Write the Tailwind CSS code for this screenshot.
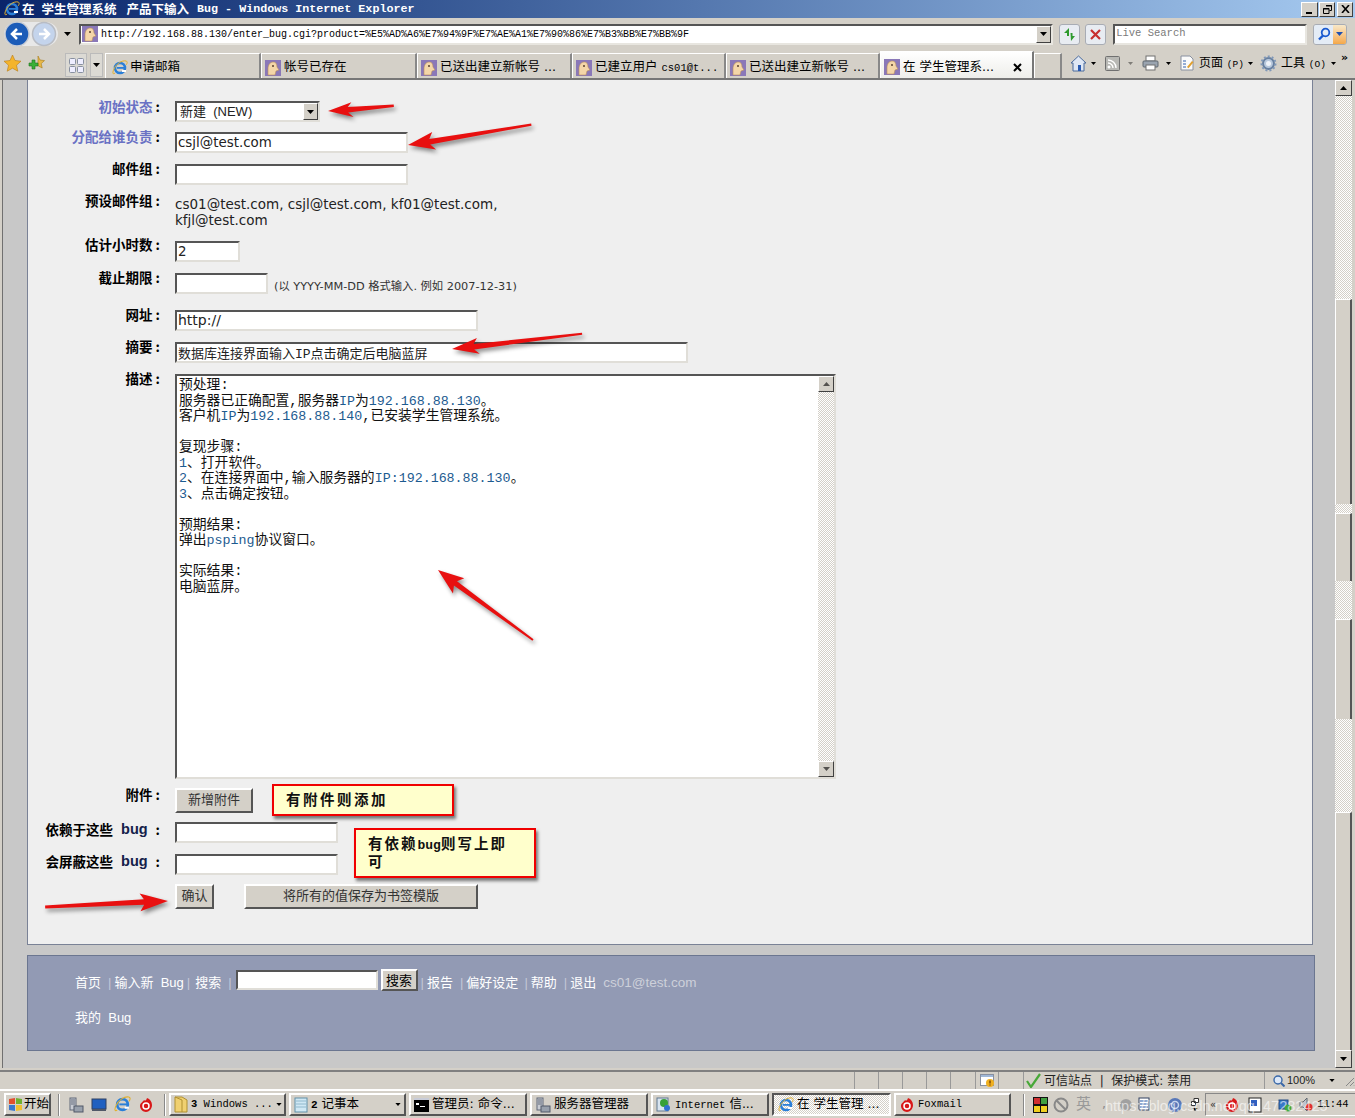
<!DOCTYPE html>
<html lang="zh-CN">

<head>
    <meta charset="UTF-8">
    <title>在 学生管理系统 产品下输入 Bug</title>
    <script src="https://cdn.jsdelivr.net/npm/@tailwindcss/browser@4"></script>
</head>

<body class="bg-[#d4d0c8]">
    <!-- shared icons -->
    <svg class="hidden">
        <symbol id="fav" viewBox="0 0 16 16">
            <rect width="16" height="16" fill="#8a78b8" />
            <path d="M3 15V9c0-4 2-7 5-7s4 2 4 5l2 3-3 1-1 4z" fill="#f4d6a8" stroke="#b98f5c" stroke-width=".6" />
            <circle cx="8" cy="6" r="1" fill="#5a4030" />
        </symbol>
        <symbol id="ie" viewBox="0 0 16 16">
            <circle cx="8" cy="8" r="5" fill="none" stroke="#2a7fd8" stroke-width="2.6" />
            <rect x="5" y="7" width="8" height="1.8" fill="#2a7fd8" />
            <path d="M3 13C1 15 0 13 2 9 4 4 10 0 14 1c2 .6 1 3 0 4" fill="none" stroke="#e0b030" stroke-width="1" />
            <rect x="10" y="10" width="4" height="2" fill="#fff" />
        </symbol>
        <symbol id="server" viewBox="0 0 16 16">
            <rect x="2" y="1" width="6" height="12" fill="#c8ccd4" stroke="#606878" />
            <path d="M3 3h4M3 5h4M3 7h4" stroke="#606878" />
            <rect x="6" y="9" width="9" height="6" fill="#98a0ac" stroke="#505868" />
        </symbol>
        <symbol id="fox" viewBox="0 0 16 16">
            <path d="M9 1c3 1 5 4 5 7 0 4-3 7-6 7s-6-3-6-6c0-3 3-4 4-6 1 1 2 1 3-2z" fill="#d81818" />
            <circle cx="8" cy="9" r="3" fill="none" stroke="#fff" stroke-width="1.5" />
        </symbol>
        <symbol id="drop" viewBox="0 0 7 4">
            <path d="M0 0h7L3.500 4z" fill="#000" />
        </symbol>
    </svg>

    <div class="relative w-[1355px] h-[1118px] overflow-hidden flex flex-col font-['DejaVu_Sans','Noto_Sans_CJK_SC',sans-serif] text-[13px]">

        <!-- title bar -->
        <div class="h-[18px] shrink-0 flex items-center bg-linear-to-r from-[#0a246a] to-[#a6caf0] text-white font-bold pl-[4px] whitespace-nowrap">
            <svg class="w-[16px] h-[16px] mr-[2px]"><use href="#ie" /></svg>
            <span class="text-[12.500px] font-['Noto_Sans_CJK_SC',sans-serif] leading-[18px]">在</span>
            <span class="ml-[7px] text-[12.500px] font-['Noto_Sans_CJK_SC',sans-serif] leading-[18px]">学生管理系统</span>
            <span class="ml-[10px] text-[12.500px] font-['Noto_Sans_CJK_SC',sans-serif] leading-[18px]">产品下输入</span>
            <span class="ml-[8px] text-[11.700px] font-['Liberation_Mono',monospace] leading-[18px]">Bug - Windows Internet Explorer</span>
            <div class="ml-auto flex gap-[1px] pr-[2px]">
                <div class="w-[17px] h-[15px] bg-[#d4d0c8] border border-t-white border-l-white border-r-[#404040] border-b-[#404040] flex items-end justify-center pb-[2px]"><div class="w-[6px] h-[2px] bg-black mr-[2px]"></div></div>
                <div class="w-[16px] h-[15px] bg-[#d4d0c8] border border-t-white border-l-white border-r-[#404040] border-b-[#404040] flex items-center justify-center">
                    <svg class="w-[9px] h-[9px]" viewBox="0 0 9 9"><path d="M3 .5h5.500v5H6.500M.5 3.500h5.500v5H.5z" fill="none" stroke="#000" /><path d="M3 1h6M0 4h6" stroke="#000" /></svg>
                </div>
                <div class="w-[16px] h-[15px] ml-[1px] bg-[#d4d0c8] border border-t-white border-l-white border-r-[#404040] border-b-[#404040] flex items-center justify-center">
                    <svg class="w-[9px] h-[8px]" viewBox="0 0 9 8"><path d="M1 0l7 8M8 0L1 8" stroke="#000" stroke-width="1.6" /></svg>
                </div>
            </div>
        </div>

        <!-- address bar -->
        <div class="h-[30px] shrink-0 flex items-center pl-[4px] pr-[8px] pt-[2px]">
            <div class="flex items-center w-[54px] h-[24px] bg-[#e8e8e8] rounded-full">
                <svg class="w-[26px] h-[26px] shrink-0" viewBox="0 0 26 26">
                    <circle cx="13" cy="13" r="12" fill="#1c5cb8" stroke="#c8ccd4" stroke-width="1.500" />
                    <path d="M18 13H9M13 8l-5 5 5 5" fill="none" stroke="#fff" stroke-width="2.500" />
                </svg>
                <svg class="w-[26px] h-[26px] shrink-0 ml-[1px]" viewBox="0 0 26 26">
                    <circle cx="13" cy="13" r="11.500" fill="#c4d4ec" stroke="#b8bcc4" stroke-width="1.500" />
                    <path d="M8 13h9M13 8l5 5-5 5" fill="none" stroke="#fff" stroke-width="2.500" />
                </svg>
            </div>
            <svg class="w-[7px] h-[4px] ml-[6px]"><use href="#drop" /></svg>
            <div class="ml-[8px] w-[975px] h-[21px] flex items-center bg-white border-2 border-t-[#555] border-l-[#555] border-r-[#e8e6e0] border-b-[#e8e6e0]">
                <svg class="w-[16px] h-[16px] ml-[1px] shrink-0"><use href="#fav" /></svg>
                <span class="ml-[3px] font-['Liberation_Mono',monospace] text-[10px] text-black whitespace-nowrap">http://192.168.88.130/enter_bug.cgi?product=%E5%AD%A6%E7%94%9F%E7%AE%A1%E7%90%86%E7%B3%BB%E7%BB%9F</span>
                <div class="ml-auto w-[15px] h-[17px] bg-[#d4d0c8] border border-t-white border-l-white border-r-[#404040] border-b-[#404040] flex items-center justify-center"><svg class="w-[7px] h-[4px]"><use href="#drop" /></svg></div>
            </div>
            <div class="ml-[6px] w-[21px] h-[21px] flex items-center justify-center bg-[#e8ecf2] border border-[#a8acb4] rounded-[3px]">
                <svg class="w-[15px] h-[15px]" viewBox="0 0 15 15"><path d="M7 1L2 6h3v3h2zM9 14l4-5h-2.500V6H8.500z" fill="#2e9a2e" /></svg>
            </div>
            <div class="ml-[5px] w-[21px] h-[21px] flex items-center justify-center bg-[#e8ecf2] border border-[#a8acb4] rounded-[3px]">
                <svg class="w-[11px] h-[11px]" viewBox="0 0 11 11"><path d="M1 1l9 9M10 1l-9 9" stroke="#c83030" stroke-width="2.200" /></svg>
            </div>
            <div class="ml-[7px] w-[194px] h-[21px] flex items-center bg-white border-2 border-t-[#555] border-l-[#555] border-r-[#e8e6e0] border-b-[#e8e6e0] pl-[1px] font-['Liberation_Mono',monospace] text-[10.500px] text-[#7a7a7a]">Live Search</div>
            <div class="ml-[6px] flex h-[21px] rounded-[3px] overflow-hidden border border-[#a8acb4]">
                <div class="w-[19px] bg-[#e4ecf6] flex items-center justify-center">
                    <svg class="w-[14px] h-[14px]" viewBox="0 0 14 14"><circle cx="8.500" cy="5.500" r="3.800" fill="none" stroke="#1a5ad0" stroke-width="1.800" /><path d="M6 8.500L2 12.500" stroke="#1a5ad0" stroke-width="2.400" /></svg>
                </div>
                <div class="w-[13px] bg-linear-to-b from-[#f8e8c8] to-[#f4a848] flex items-center justify-center">
                    <svg class="w-[7px] h-[4px]" viewBox="0 0 7 4"><path d="M0 0h7L3.500 4z" fill="#2050b0" /></svg>
                </div>
            </div>
        </div>

        <!-- tabs and command bar -->
        <div class="h-[32px] shrink-0 flex items-end pl-[4px] text-[12.500px] border-b-2 border-[#777]">
            <div class="flex items-center h-[29px] w-[55px] gap-[7px] self-center">
                <svg class="w-[17px] h-[17px]" viewBox="0 0 17 17"><path d="M8.500 0l2.500 5.500 6 .7-4.500 4 1.300 6-5.300-3-5.300 3 1.300-6L0 6.200l6-.7z" fill="#f4b42c" stroke="#b87c18" stroke-width=".6" /></svg>
                <svg class="w-[17px] h-[17px]" viewBox="0 0 17 17"><path d="M10 1l2 4 4.500.6-3.300 3 1 4.400-4.200-2.300z" fill="#e8b848" stroke="#a87c18" stroke-width=".6" /><path d="M4 6h3V3h3v3h3v3h-3v3H7V9H4z" fill="#38b038" stroke="#207020" stroke-width=".6" transform="translate(-3 2)" /></svg>
            </div>
            <div class="ml-[6px] w-[22px] h-[24px] mb-[1px] flex items-center justify-center border border-[#bbb] bg-[#dcdad4]">
                <svg class="w-[15px] h-[15px]" viewBox="0 0 15 15"><rect x=".5" y=".5" width="6" height="6" rx="1" fill="#eef" stroke="#8890a0" /><rect x="8.500" y=".5" width="6" height="6" rx="1" fill="#eef" stroke="#8890a0" /><rect x=".5" y="8.500" width="6" height="6" rx="1" fill="#eef" stroke="#8890a0" /><rect x="8.500" y="8.500" width="6" height="6" rx="1" fill="#eef" stroke="#8890a0" /></svg>
            </div>
            <div class="ml-[3px] w-[13px] h-[24px] mb-[1px] flex items-center justify-center border border-[#bbb] bg-[#dcdad4]"><svg class="w-[7px] h-[4px]"><use href="#drop" /></svg></div>
            <div class="ml-[2px] w-[156px] h-[25px] flex items-center gap-[2px] pl-[6px] pt-[3px] border-t border-l border-t-white border-l-white border-r-2 border-r-[#888]">
                <svg class="w-[16px] h-[16px]"><use href="#ie" /></svg><span>申请邮箱</span>
            </div>
            <div class="w-[156px] h-[25px] flex items-center gap-[3px] pl-[3px] pt-[3px] border-t border-l border-t-white border-l-white border-r-2 border-r-[#888]">
                <svg class="w-[16px] h-[16px]"><use href="#fav" /></svg><span>帐号已存在</span>
            </div>
            <div class="w-[155px] h-[25px] flex items-center gap-[3px] pl-[3px] pt-[3px] border-t border-l border-t-white border-l-white border-r-2 border-r-[#888]">
                <svg class="w-[16px] h-[16px]"><use href="#fav" /></svg><span class="whitespace-nowrap">已送出建立新帐号 ...</span>
            </div>
            <div class="w-[154px] h-[25px] flex items-center gap-[3px] pl-[3px] pt-[3px] border-t border-l border-t-white border-l-white border-r-2 border-r-[#888]">
                <svg class="w-[16px] h-[16px]"><use href="#fav" /></svg><span class="whitespace-nowrap">已建立用户 <span class="font-['Liberation_Mono',monospace] text-[10.500px]">cs01@t...</span></span>
            </div>
            <div class="w-[154px] h-[25px] flex items-center gap-[3px] pl-[3px] pt-[3px] border-t border-l border-t-white border-l-white border-r-2 border-r-[#888]">
                <svg class="w-[16px] h-[16px]"><use href="#fav" /></svg><span class="whitespace-nowrap">已送出建立新帐号 ...</span>
            </div>
            <div class="w-[154px] h-[27px] flex items-center gap-[3px] pl-[3px] pr-[10px] pt-[4px] bg-linear-to-b from-white to-[#eeeeea] border-l border-t border-white border-r-2 border-r-[#777]">
                <svg class="w-[16px] h-[16px]"><use href="#fav" /></svg><span class="whitespace-nowrap">在 学生管理系...</span>
                <svg class="ml-auto w-[9px] h-[9px]" viewBox="0 0 9 9"><path d="M1 1l7 7M8 1L1 8" stroke="#000" stroke-width="2" /></svg>
            </div>
            <div class="w-[28px] h-[25px] border-t border-l border-t-white border-l-white border-r-2 border-r-[#888]"></div>
            <div class="flex items-center h-[29px] ml-[8px] gap-[4px] self-center text-[12.500px] whitespace-nowrap">
                <svg class="w-[17px] h-[17px]" viewBox="0 0 17 17"><path d="M8.500 1L1 8h2v8h11V8h2z" fill="#dfe7f4" stroke="#4a6a9c" /><rect x="8" y="10" width="3" height="6" fill="#2a5ab0" /></svg>
                <svg class="w-[5px] h-[3px] mr-[5px]"><use href="#drop" /></svg>
                <svg class="w-[15px] h-[15px]" viewBox="0 0 15 15"><rect x=".5" y=".5" width="14" height="14" rx="1" fill="#b8b8b4" stroke="#707070" /><circle cx="4" cy="11" r="1.500" fill="#fff" /><path d="M3 7a5 5 0 015 5M3 4a8 8 0 018 8" fill="none" stroke="#fff" stroke-width="1.400" /></svg>
                <svg class="w-[5px] h-[3px] ml-[4px] mr-[5px] opacity-40"><use href="#drop" /></svg>
                <svg class="w-[17px] h-[16px]" viewBox="0 0 17 16"><rect x="4" y="1" width="9" height="5" fill="#fff" stroke="#707070" /><rect x="1" y="6" width="15" height="6" rx="1" fill="#9aa4b0" stroke="#606870" /><rect x="4" y="10" width="9" height="5" fill="#fff" stroke="#707070" /></svg>
                <svg class="w-[5px] h-[3px] ml-[3px] mr-[5px]"><use href="#drop" /></svg>
                <svg class="w-[15px] h-[16px]" viewBox="0 0 15 16"><path d="M1 1h9l3 3v11H1z" fill="#fafafa" stroke="#8890a0" /><path d="M3 6h3M3 9h3M3 12h3" stroke="#3060b0" /><path d="M7 12l5-6 1.500 1.200-5 6z" fill="#e0a030" /></svg>
                <span class="text-[12px]">页面 <span class="font-['Liberation_Mono',monospace] text-[9.500px]">(P)</span></span>
                <svg class="w-[5px] h-[3px] mr-[3px]"><use href="#drop" /></svg>
                <svg class="w-[17px] h-[17px]" viewBox="0 0 17 17"><circle cx="8.500" cy="8.500" r="5.500" fill="#b8c8dc" stroke="#6880a0" stroke-width="2" /><circle cx="8.500" cy="8.500" r="7" fill="none" stroke="#8098b8" stroke-width="2" stroke-dasharray="2 2" /><circle cx="8.500" cy="8.500" r="2.500" fill="#eef2f8" /></svg>
                <span class="text-[12px]">工具 <span class="font-['Liberation_Mono',monospace] text-[9.500px]">(O)</span></span>
                <svg class="w-[5px] h-[3px] ml-[1px]"><use href="#drop" /></svg>
                <span class="ml-[1px] -mt-[12px] font-bold text-[11px] leading-none">»</span>
            </div>
        </div>

        <!-- page area -->
        <div class="flex h-[988px] shrink-0 pl-[2px] pr-[3px]">
            <div class="flex-1 min-w-0 flex flex-col bg-[#c8c8c8] border-l border-[#707070] pl-[24px] pr-[22px]">

                <!-- form card -->
                <div class="h-[865px] shrink-0 bg-[#efefef] border-x border-b border-[#7a8296] pt-[21px]">

                    <div class="flex h-[21px]">
                        <div class="w-[132px] -mt-[2px] text-right font-bold leading-[14px] text-[13.500px] font-['Noto_Sans_CJK_SC',sans-serif]"><span class="text-[#6a72c4]">初始状态</span> :</div>
                        <div class="ml-[15px] w-[145px] h-[21px] flex items-center justify-between bg-white border-2 border-t-[#555] border-l-[#555] border-r-[#e0ded8] border-b-[#e0ded8] pl-[3px] text-[#222]">
                            <span class="font-['Liberation_Sans','Noto_Sans_CJK_SC',sans-serif]">新建&nbsp; (NEW)</span>
                            <div class="w-[15px] h-[17px] bg-[#d4d0c8] border border-t-white border-l-white border-r-[#404040] border-b-[#404040] flex items-center justify-center"><svg class="w-[7px] h-[4px]"><use href="#drop" /></svg></div>
                        </div>
                    </div>

                    <div class="flex h-[21px] mt-[10px]">
                        <div class="w-[132px] -mt-[3px] text-right font-bold leading-[14px] text-[13.500px] font-['Noto_Sans_CJK_SC',sans-serif]"><span class="text-[#6a72c4]">分配给谁负责</span> :</div>
                        <input class="ml-[15px] w-[233px] h-[21px] bg-white border-2 border-t-[#555] border-l-[#555] border-r-[#e0ded8] border-b-[#e0ded8] px-[1px] text-[13.400px] text-[#222]" value="csjl@test.com">
                    </div>

                    <div class="flex h-[21px] mt-[11px]">
                        <div class="w-[132px] -mt-[3px] text-right font-bold leading-[14px] text-[13.500px] font-['Noto_Sans_CJK_SC',sans-serif]">邮件组 :</div>
                        <input class="ml-[15px] w-[233px] h-[21px] bg-white border-2 border-t-[#555] border-l-[#555] border-r-[#e0ded8] border-b-[#e0ded8]">
                    </div>

                    <div class="flex h-[32px] mt-[11px]">
                        <div class="w-[132px] -mt-[3px] text-right font-bold leading-[14px] text-[13.500px] font-['Noto_Sans_CJK_SC',sans-serif]">预设邮件组 :</div>
                        <div class="ml-[15px] w-[340px] leading-[16px] text-[13.500px] text-[#222]">cs01@test.com, csjl@test.com, kf01@test.com, kfjl@test.com</div>
                    </div>

                    <div class="flex h-[21px] mt-[13px]">
                        <div class="w-[132px] -mt-[4px] text-right font-bold leading-[14px] text-[13.500px] font-['Noto_Sans_CJK_SC',sans-serif]">估计小时数 :</div>
                        <input class="ml-[15px] w-[65px] h-[21px] bg-white border-2 border-t-[#555] border-l-[#555] border-r-[#e0ded8] border-b-[#e0ded8] px-[1px] text-[13.400px] text-[#222]" value="2">
                    </div>

                    <div class="flex h-[21px] mt-[11px]">
                        <div class="w-[132px] -mt-[3px] text-right font-bold leading-[14px] text-[13.500px] font-['Noto_Sans_CJK_SC',sans-serif]">截止期限 :</div>
                        <input class="ml-[15px] w-[93px] h-[21px] bg-white border-2 border-t-[#555] border-l-[#555] border-r-[#e0ded8] border-b-[#e0ded8]">
                        <span class="ml-[6px] mt-[6px] leading-[16px] text-[11.300px] text-[#333] whitespace-nowrap">(以 YYYY-MM-DD 格式输入. 例如 2007-12-31)</span>
                    </div>

                    <div class="flex h-[21px] mt-[16px]">
                        <div class="w-[132px] -mt-[3px] text-right font-bold leading-[14px] text-[13.500px] font-['Noto_Sans_CJK_SC',sans-serif]">网址 :</div>
                        <input class="ml-[15px] w-[303px] h-[21px] bg-white border-2 border-t-[#555] border-l-[#555] border-r-[#e0ded8] border-b-[#e0ded8] px-[1px] text-[14px] text-[#222]" value="http://">
                    </div>

                    <div class="flex h-[21px] mt-[11px]">
                        <div class="w-[132px] -mt-[3px] text-right font-bold leading-[14px] text-[13.500px] font-['Noto_Sans_CJK_SC',sans-serif]">摘要 :</div>
                        <input class="ml-[15px] w-[513px] h-[21px] bg-white border-2 border-t-[#555] border-l-[#555] border-r-[#e0ded8] border-b-[#e0ded8] px-[1px] text-[13px] text-[#222] font-['Liberation_Mono','Noto_Sans_CJK_SC',monospace]" value="数据库连接界面输入IP点击确定后电脑蓝屏">
                    </div>

                    <div class="flex h-[405px] mt-[11px]">
                        <div class="w-[132px] -mt-[3px] text-right font-bold leading-[14px] text-[13.500px] font-['Noto_Sans_CJK_SC',sans-serif]">描述 :</div>
                        <div class="ml-[15px] w-[661px] h-[405px] flex bg-white border-2 border-t-[#555] border-l-[#555] border-r-[#e0ded8] border-b-[#e0ded8]">
                            <div class="flex-1 pl-[2px] pt-[2px] leading-[15.500px] text-[13.800px] text-[#111] whitespace-pre font-['Liberation_Mono','Noto_Sans_CJK_SC',monospace]">预处理:
服务器已正确配置,服务器<span class="text-[#1d5b90] text-[13.330px]">IP</span>为<span class="text-[#1d5b90] text-[13.330px]">192.168.88.130</span>。
客户机<span class="text-[#1d5b90] text-[13.330px]">IP</span>为<span class="text-[#1d5b90] text-[13.330px]">192.168.88.140</span>,已安装学生管理系统。

复现步骤:
<span class="text-[#1d5b90] text-[13.330px]">1</span>、打开软件。
<span class="text-[#1d5b90] text-[13.330px]">2</span>、在连接界面中,输入服务器的<span class="text-[#1d5b90] text-[13.330px]">IP:192.168.88.130</span>。
<span class="text-[#1d5b90] text-[13.330px]">3</span>、点击确定按钮。

预期结果:
弹出<span class="text-[#1d5b90] text-[13.330px]">psping</span>协议窗口。

实际结果:
电脑蓝屏。</div>
                            <div class="w-[16px] shrink-0 flex flex-col bg-[repeating-conic-gradient(#d4d0c8_0%_25%,#ffffff_0%_50%)] bg-size-[2px_2px]">
                                <div class="h-[16px] bg-[#d4d0c8] border border-t-white border-l-white border-r-[#404040] border-b-[#404040] flex items-center justify-center"><svg class="w-[7px] h-[4px] rotate-180 opacity-60"><use href="#drop" /></svg></div>
                                <div class="mt-auto h-[16px] bg-[#d4d0c8] border border-t-white border-l-white border-r-[#404040] border-b-[#404040] flex items-center justify-center"><svg class="w-[7px] h-[4px] opacity-60"><use href="#drop" /></svg></div>
                            </div>
                        </div>
                    </div>

                    <div class="flex h-[25px] mt-[9px]">
                        <div class="w-[132px] -mt-[1px] text-right font-bold leading-[14px] text-[13.500px] font-['Noto_Sans_CJK_SC',sans-serif]">附件 :</div>
                        <button class="ml-[15px] w-[78px] h-[25px] pb-[4px] bg-[#d4d0c8] border-2 border-t-white border-l-white border-r-[#555] border-b-[#555] text-[13px] leading-[16px] text-[#333] font-['Noto_Sans_CJK_SC',sans-serif]">新增附件</button>
                    </div>

                    <div class="flex h-[21px] mt-[9px]">
                        <div class="w-[132px] h-[14px] text-right font-bold leading-[14px] text-[13.500px] font-['Noto_Sans_CJK_SC',sans-serif] whitespace-nowrap flex justify-end items-center gap-[8px]"><span>依赖于这些</span><span class="text-[#14204a] font-['Liberation_Sans',sans-serif] text-[14.500px]">bug</span><span>:</span></div>
                        <input class="ml-[15px] w-[163px] h-[21px] bg-white border-2 border-t-[#555] border-l-[#555] border-r-[#e0ded8] border-b-[#e0ded8]">
                    </div>

                    <div class="flex h-[21px] mt-[11px]">
                        <div class="w-[132px] h-[14px] text-right font-bold leading-[14px] text-[13.500px] font-['Noto_Sans_CJK_SC',sans-serif] whitespace-nowrap flex justify-end items-center gap-[8px]"><span>会屏蔽这些</span><span class="text-[#14204a] font-['Liberation_Sans',sans-serif] text-[14.500px]">bug</span><span>:</span></div>
                        <input class="ml-[15px] w-[163px] h-[21px] bg-white border-2 border-t-[#555] border-l-[#555] border-r-[#e0ded8] border-b-[#e0ded8]">
                    </div>

                    <div class="flex h-[25px] mt-[9px] pl-[147px]">
                        <button class="w-[39px] h-[25px] pb-[4px] bg-[#d4d0c8] border-2 border-t-white border-l-white border-r-[#555] border-b-[#555] text-[13px] leading-[16px] text-[#333] font-['Noto_Sans_CJK_SC',sans-serif]">确认</button>
                        <button class="ml-[30px] w-[234px] h-[25px] pb-[4px] bg-[#d4d0c8] border-2 border-t-white border-l-white border-r-[#555] border-b-[#555] text-[13px] leading-[16px] text-[#333] font-['Noto_Sans_CJK_SC',sans-serif]">将所有的值保存为书签模版</button>
                    </div>
                </div>

                <!-- footer links -->
                <div class="mt-[10px] -mr-[2px] h-[96px] shrink-0 bg-[#929ab4] border border-[#6b7690] pl-[47px] pt-[15px] text-[13px] text-white font-['Liberation_Sans','Noto_Sans_CJK_SC',sans-serif]">
                    <div class="flex items-center h-[24px] whitespace-nowrap">
                        <span>首页</span>
                        <span class="ml-[7px] text-[#c4c8d8]">|</span>
                        <span class="ml-[3px]">输入新&nbsp; Bug</span>
                        <span class="ml-[3px] text-[#c4c8d8]">|</span>
                        <span class="ml-[5px]">搜索</span>
                        <span class="ml-[7px] text-[#c4c8d8]">|</span>
                        <input class="ml-[4px] -mt-[7px] w-[142px] h-[20px] bg-white border-2 border-t-[#555] border-l-[#555] border-r-[#e0ded8] border-b-[#e0ded8]">
                        <button class="ml-[3px] -mt-[7px] w-[37px] h-[22px] bg-[#d4d0c8] border-2 border-t-white border-l-white border-r-[#555] border-b-[#555] text-[13px] text-black">搜索</button>
                        <span class="ml-[3px] text-[#c4c8d8]">|</span>
                        <span class="ml-[3px]">报告</span>
                        <span class="ml-[7px] text-[#c4c8d8]">|</span>
                        <span class="ml-[3px]">偏好设定</span>
                        <span class="ml-[6px] text-[#c4c8d8]">|</span>
                        <span class="ml-[3px]">帮助</span>
                        <span class="ml-[7px] text-[#c4c8d8]">|</span>
                        <span class="ml-[3px]">退出</span>
                        <span class="ml-[7px] text-[#cdd0da] text-[13.500px]">cs01@test.com</span>
                    </div>
                    <div class="mt-[13px]">我的&nbsp; Bug</div>
                </div>
            </div>

            <!-- page scrollbar -->
            <div class="w-[17px] shrink-0 flex flex-col bg-[repeating-conic-gradient(#d4d0c8_0%_25%,#ffffff_0%_50%)] bg-size-[2px_2px]">
                <div class="h-[16px] bg-[#d4d0c8] border border-t-white border-l-white border-r-[#404040] border-b-[#404040] flex items-center justify-center"><svg class="w-[7px] h-[4px] rotate-180"><use href="#drop" /></svg></div>
                <div class="h-[203px]"></div>
                <div class="h-[205px] bg-[#d4d0c8] border-l border-t border-white border-r-2 border-r-[#555]"></div>
                <div class="h-[9px]"></div>
                <div class="h-[68px] bg-[#d4d0c8] border-l border-t border-white border-r-2 border-r-[#555]"></div>
                <div class="h-[38px]"></div>
                <div class="h-[100px] bg-[#d4d0c8] border-l border-t border-white border-r-2 border-r-[#555]"></div>
                <div class="h-[93px]"></div>
                <div class="h-[238px] bg-[#d4d0c8] border-l border-t border-white border-r-2 border-r-[#555]"></div>
                <div class="flex-1 bg-[#d4d0c8] border border-t-white border-l-white border-r-[#404040] border-b-[#404040] flex items-center justify-center"><svg class="w-[7px] h-[4px]"><use href="#drop" /></svg></div>
            </div>
        </div>

        <!-- status bar -->
        <div class="mt-[2px] h-[19px] shrink-0 flex items-center border-t-2 border-[#808080] text-[12px] text-[#222] pl-[854px]">
            <div class="w-[24px] h-full border-l border-[#999]"></div>
            <div class="w-[24px] h-full border-l border-[#999]"></div>
            <div class="w-[24px] h-full border-l border-[#999]"></div>
            <div class="w-[24px] h-full border-l border-[#999]"></div>
            <div class="w-[25px] h-full border-l border-[#999]"></div>
            <div class="w-[23px] h-full border-l border-[#999] flex items-center justify-center">
                <svg class="w-[15px] h-[15px]" viewBox="0 0 15 15"><rect x=".5" y="1.500" width="13" height="11" fill="#fff" stroke="#8890a0" /><rect x="1" y="2" width="12" height="2" fill="#a0b8d8" /><circle cx="10" cy="10" r="4" fill="#f0b020" /><path d="M10 7.500v3M10 11.500v1" stroke="#603000" stroke-width="1.200" /></svg>
            </div>
            <div class="w-[25px] h-full border-l border-[#999]"></div>
            <div class="w-[241px] h-full border-l border-[#999] flex items-center gap-[3px] pl-[2px] whitespace-nowrap">
                <svg class="w-[15px] h-[15px]" viewBox="0 0 15 15"><path d="M1 8l4 6 9-13" fill="none" stroke="#48a838" stroke-width="2.200" /></svg>
                <span>可信站点 &nbsp;|&nbsp; 保护模式: 禁用</span>
            </div>
            <div class="flex-1 h-full border-l border-[#999] flex items-center pl-[8px] gap-[2px] whitespace-nowrap">
                <svg class="w-[12px] h-[12px]" viewBox="0 0 12 12"><circle cx="5" cy="5" r="4" fill="#dce8f8" stroke="#3a68a8" stroke-width="1.400" /><path d="M8 8l3.500 3.500" stroke="#3a68a8" stroke-width="2" /></svg>
                <span class="font-['Liberation_Sans',sans-serif] text-[11px]">100%</span>
                <svg class="ml-[12px] w-[6px] h-[3px]"><use href="#drop" /></svg>
                <svg class="ml-auto w-[12px] h-[12px]" viewBox="0 0 12 12"><path d="M11 3L3 11M11 7l-4 4M11 10.500l-.5.5" stroke="#888" /></svg>
            </div>
        </div>

        <!-- taskbar -->
        <div class="flex-1 flex items-center border-t-2 border-white pl-[4px] text-[12.500px] text-black whitespace-nowrap">
            <div class="w-[47px] h-[23px] flex items-center gap-[1px] pl-[2px] bg-[#d4d0c8] border-2 border-t-white border-l-white border-r-[#555] border-b-[#555]">
                <svg class="w-[15px] h-[15px] shrink-0" viewBox="0 0 15 15"><path d="M1 2l6-1v6H1z" fill="#e05030" /><path d="M8 1l6 1v5H8z" fill="#70b030" /><path d="M1 8h6v6l-6-1z" fill="#3878d0" /><path d="M8 8h6v5l-6 1z" fill="#f0c030" /></svg>
                <span>开始</span>
            </div>
            <div class="ml-[7px] w-[2px] h-[22px] bg-white border-l border-[#888]"></div>
            <div class="ml-[8px] flex items-center gap-[7px]">
                <svg class="w-[16px] h-[16px]"><use href="#server" /></svg>
                <svg class="w-[16px] h-[16px]" viewBox="0 0 16 16"><rect x="1" y="2" width="14" height="10" fill="#2060c0" stroke="#304060" /><rect x="1" y="12" width="14" height="2" fill="#505868" /></svg>
                <svg class="w-[17px] h-[17px]"><use href="#ie" /></svg>
                <svg class="w-[16px] h-[16px]"><use href="#fox" /></svg>
            </div>
            <div class="ml-[10px] w-[2px] h-[22px] bg-white border-l border-[#888]"></div>
            <div class="ml-[3px] w-[117px] h-[23px] flex items-center gap-[3px] pl-[3px] pr-[3px] bg-[#d4d0c8] border-2 border-t-white border-l-white border-r-[#555] border-b-[#555]">
                <svg class="w-[14px] h-[17px] shrink-0" viewBox="0 0 14 17"><path d="M1 1h7l5 3v12H1z" fill="#f0d070" stroke="#b09030" /><path d="M1 1l7 3v12" fill="none" stroke="#b09030" /></svg>
                <span class="font-['Liberation_Mono',monospace] text-[10.500px]"><b>3</b> Windows ...</span>
                <svg class="ml-auto w-[6px] h-[3px] shrink-0"><use href="#drop" /></svg>
            </div>
            <div class="ml-[3px] w-[117px] h-[23px] flex items-center gap-[3px] pl-[3px] pr-[3px] bg-[#d4d0c8] border-2 border-t-white border-l-white border-r-[#555] border-b-[#555]">
                <svg class="w-[14px] h-[17px] shrink-0" viewBox="0 0 14 17"><rect x="1" y="2" width="12" height="14" fill="#d0e8f4" stroke="#6090a8" /><path d="M2 5h10M2 8h10M2 11h10" stroke="#90b8cc" /></svg>
                <span><b class="font-['Liberation_Mono',monospace] text-[11px]">2</b> 记事本</span>
                <svg class="ml-auto w-[6px] h-[3px] shrink-0"><use href="#drop" /></svg>
            </div>
            <div class="ml-[3px] w-[118px] h-[23px] flex items-center gap-[3px] pl-[3px] bg-[#d4d0c8] border-2 border-t-white border-l-white border-r-[#555] border-b-[#555]">
                <svg class="w-[15px] h-[14px] shrink-0" viewBox="0 0 15 14"><rect width="15" height="14" fill="#000" /><rect width="15" height="2" fill="#c8ccd8" /><rect x="2" y="5" width="3" height="2" fill="#fff" /><rect x="6" y="8" width="5" height="1" fill="#fff" /></svg>
                <span>管理员: 命令...</span>
            </div>
            <div class="ml-[3px] w-[118px] h-[23px] flex items-center gap-[3px] pl-[3px] bg-[#d4d0c8] border-2 border-t-white border-l-white border-r-[#555] border-b-[#555]">
                <svg class="w-[16px] h-[16px] shrink-0"><use href="#server" /></svg>
                <span>服务器管理器</span>
            </div>
            <div class="ml-[3px] w-[118px] h-[23px] flex items-center gap-[3px] pl-[3px] bg-[#d4d0c8] border-2 border-t-white border-l-white border-r-[#555] border-b-[#555]">
                <svg class="w-[16px] h-[16px] shrink-0" viewBox="0 0 16 16"><rect x="1" y="1" width="11" height="13" fill="#d8e4f0" stroke="#607890" /><circle cx="8" cy="6" r="4" fill="#38a038" /><circle cx="11" cy="11" r="3" fill="#3070d0" /></svg>
                <span><span class="font-['Liberation_Mono',monospace] text-[10.500px]">Internet</span> 信...</span>
            </div>
            <div class="ml-[3px] w-[119px] h-[23px] flex items-center gap-[3px] pl-[4px] bg-[repeating-conic-gradient(#d4d0c8_0%_25%,#ffffff_0%_50%)] bg-size-[2px_2px] border-2 border-t-[#555] border-l-[#555] border-r-white border-b-white">
                <svg class="w-[16px] h-[16px] shrink-0"><use href="#ie" /></svg>
                <span>在 学生管理 ...</span>
            </div>
            <div class="ml-[3px] w-[117px] h-[23px] flex items-center gap-[3px] pl-[3px] bg-[#d4d0c8] border-2 border-t-white border-l-white border-r-[#555] border-b-[#555]">
                <svg class="w-[16px] h-[16px] shrink-0"><use href="#fox" /></svg>
                <span class="font-['Liberation_Mono',monospace] text-[10.500px]">Foxmail</span>
            </div>
            <div class="ml-[12px] w-[2px] h-[22px] bg-white border-l border-[#888]"></div>

            <!-- language bar and tray -->
            <div class="ml-[8px] flex items-center gap-[3px] flex-1 min-w-0 relative">
                <svg class="w-[15px] h-[16px] shrink-0" viewBox="0 0 15 16"><rect width="15" height="16" fill="#111" /><rect x="1" y="1" width="6" height="6" fill="#d03030" /><rect x="8" y="1" width="6" height="6" fill="#40a040" /><rect x="1" y="9" width="6" height="6" fill="#f0d020" /><rect x="8" y="9" width="6" height="6" fill="#f0d020" /></svg>
                <svg class="w-[16px] h-[16px] shrink-0 ml-[2px]" viewBox="0 0 16 16"><circle cx="8" cy="8" r="6.500" fill="none" stroke="#888" stroke-width="2" /><path d="M3.500 3.500l9 9" stroke="#888" stroke-width="2" /></svg>
                <span class="ml-[4px] text-[15px] text-[#999]">英</span>
                <span class="ml-[8px] text-[#888]">,</span>
                <svg class="ml-[10px] w-[14px] h-[14px] shrink-0" viewBox="0 0 14 14"><circle cx="7" cy="7" r="6" fill="#a0a0a0" /></svg>
                <svg class="ml-[2px] w-[14px] h-[15px] shrink-0" viewBox="0 0 14 15"><rect x="1" y="1" width="10" height="12" fill="#fff" stroke="#304060" /><path d="M2 4h8M2 7h8M2 10h8" stroke="#2050a0" /></svg>
                <div class="ml-[4px] w-[1px] h-[22px] bg-[#888]"></div>
                <svg class="ml-[5px] w-[16px] h-[16px] shrink-0" viewBox="0 0 16 16"><circle cx="8" cy="8" r="7" fill="#5878b8" /><circle cx="8" cy="8" r="3.500" fill="none" stroke="#c8d4ec" stroke-width="1.500" /></svg>
                <div class="ml-[2px] w-[1px] h-[22px] bg-[#888]"></div>
                <div class="flex flex-col items-center gap-[2px]">
                    <svg class="w-[8px] h-[8px]" viewBox="0 0 8 8"><path d="M3 .5h4.500v4H3zM.5 3.500h4v4h-4z" fill="#fff" stroke="#333" /></svg>
                    <svg class="w-[6px] h-[3px]"><use href="#drop" /></svg>
                </div>
                <div class="ml-[3px] flex-1 h-[23px] flex items-center border border-t-[#888] border-l-[#888] border-r-white border-b-white pl-[4px] pr-[6px] gap-[4px]">
                    <span class="text-[10px] text-[#333]">«</span>
                    <svg class="ml-[4px] w-[16px] h-[16px] shrink-0"><use href="#fox" /></svg>
                    <svg class="ml-[4px] w-[14px] h-[16px] shrink-0" viewBox="0 0 14 16"><rect x="1" y="1" width="12" height="14" fill="#fff" stroke="#222" /><rect x="3" y="3" width="6" height="6" fill="#3060c0" /></svg>
                    <svg class="ml-[12px] w-[15px] h-[15px] shrink-0" viewBox="0 0 15 15"><rect x="1" y="3" width="9" height="9" fill="#3878c8" stroke="#204880" /><circle cx="10" cy="11" r="3.500" fill="#40a840" /></svg>
                    <svg class="ml-[2px] w-[14px] h-[15px] shrink-0" viewBox="0 0 14 15"><path d="M1 5h3l4-4v13l-4-4H1z" fill="#c0c4cc" stroke="#606870" /><circle cx="10" cy="10" r="3.500" fill="#e03030" /></svg>
                    <span class="ml-auto font-['Liberation_Mono',monospace] text-[10.500px]">11:44</span>
                </div>
                <span class="absolute left-[72px] top-[3px] text-[14.500px] text-white/60 font-['Liberation_Sans',sans-serif] pointer-events-none">https://blog.csdn.net/qq_47282425</span>
            </div>
        </div>

        <!-- red arrows drawn over the page -->
        <svg class="absolute left-0 top-0 w-[1355px] h-[1118px] pointer-events-none drop-shadow-[2px_3px_2px_rgba(0,0,0,0.45)]" viewBox="0 0 1355 1118">
            <g fill="#e81010">
                <polygon transform="translate(328 111) rotate(-4.300)" points="0,0 24,-7 20,-2.500 66,-1.500 66,1 20,3 25,8" />
                <polygon transform="translate(408 145) rotate(-9.200)" points="0,0 26,-9 22,-2.500 125,-1.500 125,.8 22,3 27,9" />
                <polygon transform="translate(452 349) rotate(-6.600)" points="0,0 26,-8 22,-2.500 131,-1.200 131,.8 22,3 27,8" />
                <polygon transform="translate(438 570) rotate(36.400)" points="0,0 26,-9 22,-2.200 118,-1 118,1 22,3 26,10" />
                <polygon transform="translate(168 901) rotate(177.200)" points="0,0 28,-9 24,-2.500 123,-1.500 123,1.500 24,3 28,9" />
            </g>
        </svg>

        <!-- yellow notes -->
        <div class="absolute left-[272px] top-[784px] w-[182px] h-[32px] bg-[#ffffcc] border-2 border-[#f00000] shadow-[2px_3px_3px_rgba(0,0,0,0.5)] flex items-center pl-[12px] pb-[3px] font-bold text-[14.500px] tracking-[2.500px] text-[#111] font-['Noto_Sans_CJK_SC',sans-serif]">有附件则添加</div>
        <div class="absolute left-[354px] top-[828px] w-[182px] h-[50px] bg-[#ffffcc] border-2 border-[#f00000] shadow-[2px_3px_3px_rgba(0,0,0,0.5)] pl-[12px] pt-[5px] font-bold text-[14.500px] leading-[15px] tracking-[2px] text-[#111] font-['Noto_Sans_CJK_SC',sans-serif]">有依赖<span class="font-['Liberation_Mono',monospace] text-[13px] tracking-normal">bug</span>则写上即<br>可</div>
    </div>
</body>

</html>
